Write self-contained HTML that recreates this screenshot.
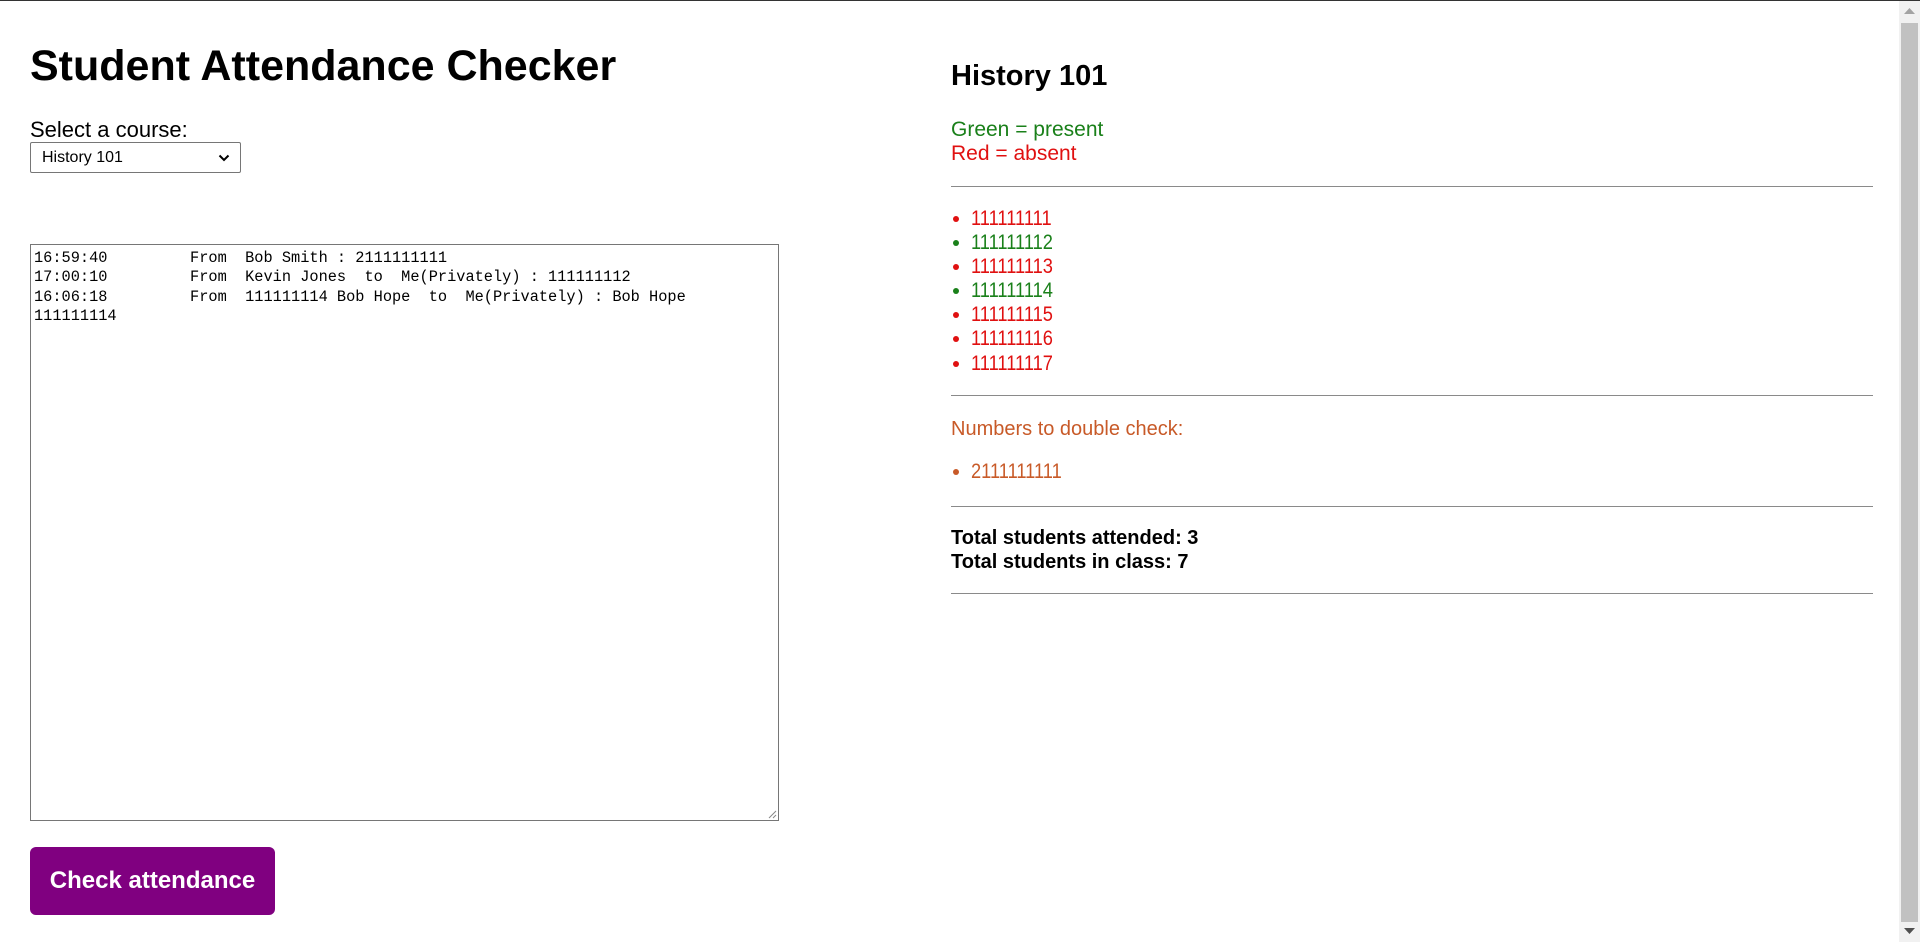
<!DOCTYPE html>
<html><head><meta charset="utf-8"><style>
html,body{margin:0;padding:0;width:1920px;height:942px;overflow:hidden;background:#fff;font-family:"Liberation Sans",sans-serif;}
.a{position:absolute;white-space:pre;line-height:1.15;}
.hr{position:absolute;left:951px;width:922px;height:1px;background:#8a8a8a;}
.li{position:absolute;left:971px;font-size:21px;line-height:24px;}
.li span{display:inline-block;transform:scaleX(0.87);transform-origin:0 0;}
.li:before{content:"";position:absolute;left:-18px;top:9px;width:6px;height:6px;border-radius:50%;background:currentColor;}
.r{color:#e01010}.g{color:#1a801a}
</style></head><body>
<div style="position:absolute;left:0;top:0;width:1920px;height:1px;background:#333"></div>
<div class="a" style="left:30px;top:42px;font-size:43px;font-weight:bold;color:#000">Student Attendance Checker</div>
<div class="a" style="left:30px;top:117px;font-size:22px;color:#000">Select a course:</div>
<div style="position:absolute;left:30px;top:142px;width:209px;height:29px;border:1px solid #767676;border-radius:2px;background:#fff">
<div class="a" style="left:11px;top:6px;font-size:16px">History 101</div>
<svg style="position:absolute;left:187px;top:11px" width="12" height="8" viewBox="0 0 12 8"><path d="M1.5 1.5 L6 6 L10.5 1.5" fill="none" stroke="#000" stroke-width="2"/></svg>
</div>
<div style="position:absolute;left:30px;top:244px;width:747px;height:575px;border:1px solid #767676;background:#fff">
<div style="position:absolute;left:3px;top:4px;font-family:'Liberation Mono',monospace;font-size:15.3px;line-height:19.4px;white-space:pre;color:#000">16:59:40         From  Bob Smith : 2111111111
17:00:10         From  Kevin Jones  to  Me(Privately) : 111111112
16:06:18         From  111111114 Bob Hope  to  Me(Privately) : Bob Hope
111111114</div>
<svg style="position:absolute;right:1px;bottom:1px" width="10" height="10" viewBox="0 0 10 10"><path d="M9 2 L2 9 M9 6 L6 9" stroke="#888" stroke-width="1"/></svg>
</div>
<div style="position:absolute;left:30px;top:847px;width:245px;height:68px;background:#800080;border-radius:6px"></div>
<div class="a" style="left:30px;top:867px;width:245px;text-align:center;font-size:24px;font-weight:bold;color:#fff">Check attendance</div>

<div class="a" style="left:951px;top:60px;font-size:29px;font-weight:bold;color:#000">History 101</div>
<div class="a g" style="left:951px;top:118px;font-size:21px;line-height:24px">Green = present</div>
<div class="a r" style="left:951px;top:142px;font-size:21px;line-height:24px">Red = absent</div>
<div class="hr" style="top:186px"></div>
<div class="li r" style="top:207px"><span>111111111</span></div>
<div class="li g" style="top:231px"><span>111111112</span></div>
<div class="li r" style="top:255px"><span>111111113</span></div>
<div class="li g" style="top:279px"><span>111111114</span></div>
<div class="li r" style="top:303px"><span>111111115</span></div>
<div class="li r" style="top:327px"><span>111111116</span></div>
<div class="li r" style="top:352px"><span>111111117</span></div>
<div class="hr" style="top:395px"></div>
<div class="a" style="left:951px;top:417px;font-size:20px;line-height:24px;color:#c85a28">Numbers to double check:</div>
<div class="li" style="top:460px;color:#c85a28"><span>2111111111</span></div>
<div class="hr" style="top:506px"></div>
<div class="a" style="left:951px;top:526px;font-size:20px;line-height:24px;font-weight:bold">Total students attended: 3</div>
<div class="a" style="left:951px;top:550px;font-size:20px;line-height:24px;font-weight:bold">Total students in class: 7</div>
<div class="hr" style="top:593px"></div>

<div style="position:absolute;left:1899px;top:1px;width:21px;height:941px;background:#f1f1f1"></div>
<div style="position:absolute;left:1901px;top:23px;width:17px;height:899px;background:#c1c1c1"></div>
<svg style="position:absolute;left:1904px;top:8px" width="11" height="6"><path d="M0 6 L5.5 0 L11 6Z" fill="#a3a3a3"/></svg>
<svg style="position:absolute;left:1904px;top:928px" width="11" height="6"><path d="M0 0 L5.5 6 L11 0Z" fill="#505050"/></svg>
</body></html>
